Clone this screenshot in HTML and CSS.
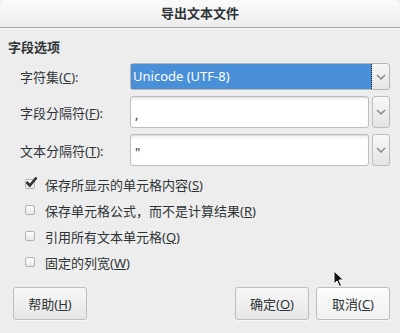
FILE: index.html
```html
<!DOCTYPE html>
<html lang="zh-CN">
<head>
    <meta charset="UTF-8" />
    <title>导出文本文件</title>
    <link rel="stylesheet" href="styles.css">
</head>
<body>
    <div class="dialog">
        <div class="titlebar">导出文本文件</div>

        <div class="content">
            <div class="section-title">字段选项</div>

            <!-- 字段设置 -->
            <div class="fields">
                <label class="field-label">字符集(<u>C</u>):</label>
                <div class="combo combo-select">
                    <div class="combo-value">Unicode (UTF-8)</div>
                    <div class="combo-arrow">
                        <svg width="10" height="6" viewBox="0 0 10 6"><polyline points="1,1 5,5 9,1" fill="none" stroke="#8a8a8a" stroke-width="1.5"/></svg>
                    </div>
                </div>

                <label class="field-label">字段分隔符(<u>F</u>):</label>
                <div class="combo combo-entry">
                    <div class="entry">,</div>
                    <div class="arrow-btn">
                        <svg width="10" height="6" viewBox="0 0 10 6"><polyline points="1,1 5,5 9,1" fill="none" stroke="#8a8a8a" stroke-width="1.5"/></svg>
                    </div>
                </div>

                <label class="field-label">文本分隔符(<u>T</u>):</label>
                <div class="combo combo-entry">
                    <div class="entry">"</div>
                    <div class="arrow-btn">
                        <svg width="10" height="6" viewBox="0 0 10 6"><polyline points="1,1 5,5 9,1" fill="none" stroke="#8a8a8a" stroke-width="1.5"/></svg>
                    </div>
                </div>
            </div>

            <!-- 选项 -->
            <div class="checks">
                <div class="check-row">
                    <span class="check-box checked">
                        <svg width="13" height="12" viewBox="0 0 13 12"><polyline points="1.5,6 4.8,9.5 11.5,1.5" fill="none" stroke="#2e3436" stroke-width="2.6"/></svg>
                    </span>
                    <span>保存所显示的单元格内容(<u>S</u>)</span>
                </div>
                <div class="check-row">
                    <span class="check-box"></span>
                    <span>保存单元格公式，而不是计算结果(<u>R</u>)</span>
                </div>
                <div class="check-row">
                    <span class="check-box"></span>
                    <span>引用所有文本单元格(<u>Q</u>)</span>
                </div>
                <div class="check-row">
                    <span class="check-box"></span>
                    <span>固定的列宽(<u>W</u>)</span>
                </div>
            </div>

            <div class="buttons">
                <button class="btn">帮助(<u>H</u>)</button>
                <div class="btn-group">
                    <button class="btn">确定(<u>O</u>)</button>
                    <button class="btn btn-light">取消(<u>C</u>)</button>
                </div>
            </div>
        </div>

        <!-- 鼠标指针 -->
        <svg class="pointer" width="12" height="18" viewBox="0 0 12 18">
            <path d="M1,1 L1,14 L4,11 L6.5,16.5 L8.5,15.5 L6,10 L10.5,10 Z" fill="#111" stroke="#fff" stroke-width="1"/>
        </svg>
    </div>
</body>
</html>
```

FILE: styles.css
```css
*, *::before, *::after {
    box-sizing: border-box;
    margin: 0;
    padding: 0;
}

body {
    background: #ededed;
    font-family: 'Noto Sans', 'Noto Sans CJK SC', sans-serif;
    font-size: 13px;
    color: #2e3436;
}

.dialog {
    position: relative;
    width: 400px;
    height: 333px;
    background: #ededed;
}

/* 标题栏 */
.titlebar {
    height: 28px;
    line-height: 26px;
    text-align: center;
    font-weight: bold;
    background: linear-gradient(#fbfbfb, #ececec);
    border-top-left-radius: 6px;
    border-top-right-radius: 6px;
    border-bottom: 1px solid #a6a6a6;
    box-shadow: 0 1px 0 #f7f7f7;
}

.content {
    padding: 11px 10px 0 8px;
}

.section-title {
    font-weight: bold;
    line-height: 16px;
}

/* 字段 */
.fields {
    display: grid;
    grid-template-columns: 122px 1fr;
    grid-template-rows: 27px 32px 32px;
    row-gap: 6px;
    margin-top: 8px;
    align-items: center;
}

.field-label {
    padding-left: 12px;
}

.combo {
    display: flex;
    height: 100%;
    gap: 3px;
}

.combo-select {
    border: 1px solid #b6b6b3;
    border-radius: 3px;
    background: linear-gradient(#f6f6f6, #e6e6e6);
    gap: 0;
}

.combo-value {
    flex: 1;
    background: #4a90d9;
    color: #fff;
    padding-left: 2px;
    line-height: 25px;
    border-right: 1px dotted #222;
}

.combo-arrow {
    width: 17px;
    display: flex;
    align-items: center;
    justify-content: center;
}

.entry {
    flex: 1;
    border: 1px solid #bdbdbd;
    border-radius: 3px;
    background: linear-gradient(#f0f0f0, #fff 5px);
    box-shadow: inset 0 1px 1px rgba(0, 0, 0, 0.08);
    padding: 8px 0 0 4px;
}

.arrow-btn {
    width: 18px;
    border: 1px solid #bdbdbd;
    border-radius: 3px;
    background: linear-gradient(#f8f8f8, #e4e4e4);
    display: flex;
    align-items: center;
    justify-content: center;
}

/* 复选框 */
.checks {
    margin-top: 5px;
    padding-left: 17px;
}

.check-row {
    height: 26px;
    display: flex;
    align-items: center;
    gap: 8px;
}

.check-box {
    width: 10px;
    height: 10px;
    margin-right: 2px;
    border: 1px solid #b3b3b3;
    border-radius: 2px;
    background: linear-gradient(#fdfdfd, #e8e8e8);
    position: relative;
}

.check-box.checked svg {
    position: absolute;
    left: -1px;
    top: -4px;
}

/* 按钮 */
.buttons {
    display: flex;
    justify-content: space-between;
    margin-top: 12px;
    padding-left: 5px;
}

.btn-group {
    display: flex;
    gap: 7px;
}

.btn {
    width: 74px;
    height: 33px;
    font: inherit;
    color: #2e3436;
    border: 1px solid #bdbdbd;
    border-radius: 3px;
    background: linear-gradient(#f7f7f7, #e6e6e6);
    box-shadow: 0 1px 0 rgba(255, 255, 255, 0.6);
}

.btn-light {
    background: linear-gradient(#fcfcfc, #f0f0f0);
}

.pointer {
    position: absolute;
    left: 333px;
    top: 270px;
}
```
